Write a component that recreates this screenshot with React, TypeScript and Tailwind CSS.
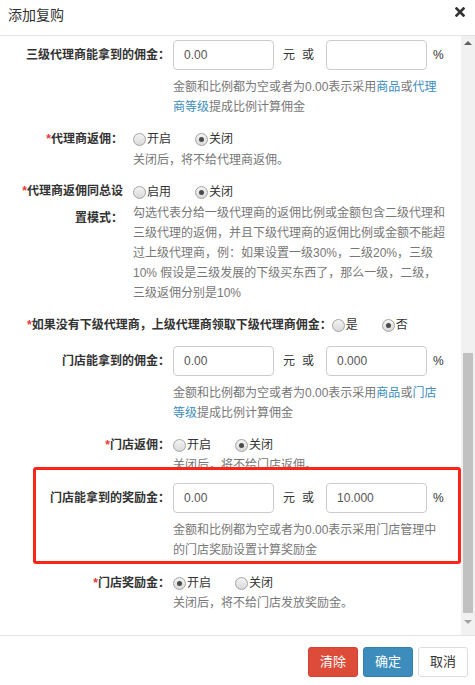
import React from "react";

const FONT = "font-[family-name:'Liberation_Sans','Noto_Sans_CJK_SC',sans-serif]";

function Radio({ checked, label, first }: { checked?: boolean; label: string; first?: boolean }) {
  return (
    <span className={`flex items-center ${first ? "" : "ml-[24px]"}`}>
      <span className="flex h-[13px] w-[13px] items-center justify-center rounded-full border border-[#a3a3a3] bg-gradient-to-b from-[#f4f4f4] to-[#d9d9d9]">
        {checked && <span className="h-[5px] w-[5px] rounded-full bg-[#4a4a4a]" />}
      </span>
      <span className="ml-[1px] text-[12px] leading-[20px] text-[#333]">{label}</span>
    </span>
  );
}

function Req() {
  return <span className="text-[#e4393c]">*</span>;
}

function Box({ value }: { value: string }) {
  return (
    <div className="flex h-[30px] w-[101px] shrink-0 items-center rounded-[4px] border border-[#ccc] bg-white px-[10px] text-[12px] text-[#555]">
      {value}
    </div>
  );
}

function AmountRow({ label, a, b, help }: { label: string; a: string; b: string; help: React.ReactNode }) {
  return (
    <div className="flex items-start">
      <div className="w-[170px] shrink-0 text-right text-[12px] font-bold leading-[30px] text-[#333]">{label}</div>
      <div className="ml-[3px] w-[270px]">
        <div className="flex h-[30px] items-center text-[12px] text-[#333]">
          <Box value={a} />
          <span className="ml-[9px]">元</span>
          <span className="ml-[7px]">或</span>
          <div className="ml-[12px]">
            <Box value={b} />
          </div>
          <span className="ml-[6px]">%</span>
        </div>
        <p className="mt-[7px] text-[12px] leading-[20px] text-[#777]">{help}</p>
      </div>
    </div>
  );
}

function Link({ children }: { children: React.ReactNode }) {
  return <span className="text-[#3c8dbc]">{children}</span>;
}

export default function App() {
  return (
    <div className={`h-[685px] w-[475px] overflow-hidden bg-white ${FONT}`}>
      {/* header */}
      <div className="flex h-[36px] items-start justify-between border-b border-[#e5e5e5] pl-[8px] pr-[10px]">
        <h4 className="pt-[6px] text-[14px] leading-[18px] text-[#333]">添加复购</h4>
        <svg width="10" height="10" viewBox="0 0 10 10" className="mt-[7px]">
          <path d="M1.5 1.5 L8.5 8.5 M8.5 1.5 L1.5 8.5" stroke="#333" strokeWidth="2.6" strokeLinecap="square" />
        </svg>
      </div>

      {/* body */}
      <div className="flex h-[599px]">
        <div className="relative min-w-0 flex-1 overflow-hidden pt-[4px]">
          <div className="mb-[12px]">
            <AmountRow
              label="三级代理商能拿到的佣金："
              a="0.00"
              b=""
              help={
                <>
                  金额和比例都为空或者为0.00表示采用<Link>商品</Link>或<Link>代理商等级</Link>提成比例计算佣金
                </>
              }
            />
          </div>

          <div className="mb-[12px] flex items-start">
            <div className="w-[123px] shrink-0 text-right text-[12px] font-bold leading-[20px] text-[#333]">
              <Req />代理商返佣：
            </div>
            <div className="ml-[10px]">
              <div className="flex h-[20px] items-center">
                <Radio first label="开启" />
                <Radio checked label="关闭" />
              </div>
              <p className="mt-[1px] text-[12px] leading-[20px] text-[#777]">关闭后，将不给代理商返佣。</p>
            </div>
          </div>

          <div className="mb-[12px] flex items-start">
            <div className="ml-[19px] -mt-[4px] w-[104px] shrink-0 text-right text-[12px] font-bold leading-[27px] text-[#333]">
              <Req />代理商返佣同总设置模式：
            </div>
            <div className="ml-[10px]">
              <div className="flex h-[20px] items-center">
                <Radio first label="启用" />
                <Radio checked label="关闭" />
              </div>
              <p className="mt-[1px] w-[313px] text-[12px] leading-[20px] text-[#777]">
                勾选代表分给一级代理商的返佣比例或金额包含二级代理和三级代理的返佣，并且下级代理商的返佣比例或金额不能超过上级代理商，例：如果设置一级30%，二级20%，三级10% 假设是三级发展的下级买东西了，那么一级，二级，三级返佣分别是10%
              </p>
            </div>
          </div>

          <div className="mb-[11px] flex h-[20px] items-center pl-[27px]">
            <span className="text-[12px] font-bold leading-[20px] text-[#333]">
              <Req />如果没有下级代理商，上级代理商领取下级代理商佣金：
            </span>
            <Radio first label="是" />
            <Radio checked label="否" />
          </div>

          <div className="mb-[12px]">
            <AmountRow
              label="门店能拿到的佣金："
              a="0.00"
              b="0.000"
              help={
                <>
                  金额和比例都为空或者为0.00表示采用<Link>商品</Link>或<Link>门店等级</Link>提成比例计算佣金
                </>
              }
            />
          </div>

          <div className="mb-[8px] flex items-start">
            <div className="w-[170px] shrink-0 text-right text-[12px] font-bold leading-[20px] text-[#333]">
              <Req />门店返佣：
            </div>
            <div className="ml-[3px]">
              <div className="flex h-[20px] items-center">
                <Radio first label="开启" />
                <Radio checked label="关闭" />
              </div>
              <p className="text-[12px] leading-[20px] text-[#777]">关闭后，将不给门店返佣。</p>
            </div>
          </div>

          <div className="relative mb-[13px]">
            <AmountRow
              label="门店能拿到的奖励金："
              a="0.00"
              b="10.000"
              help="金额和比例都为空或者为0.00表示采用门店管理中的门店奖励设置计算奖励金"
            />
            {/* annotation frame */}
            <div className="pointer-events-none absolute -top-[16px] left-[33px] right-0 h-[97px] rounded-[3px] border-[3px] border-[#ff2418]" />
          </div>

          <div className="flex items-start">
            <div className="w-[170px] shrink-0 text-right text-[12px] font-bold leading-[20px] text-[#333]">
              <Req />门店奖励金：
            </div>
            <div className="ml-[3px]">
              <div className="flex h-[20px] items-center">
                <Radio first checked label="开启" />
                <Radio label="关闭" />
              </div>
              <p className="text-[12px] leading-[20px] text-[#777]">关闭后，将不给门店发放奖励金。</p>
            </div>
          </div>
        </div>

        {/* scrollbar */}
        <div className="flex w-[14px] shrink-0 flex-col items-center bg-[#f1f1f1]">
          <div className="mt-[5px] h-0 w-0 border-x-[4px] border-b-[4px] border-x-transparent border-b-[#606060]" />
          <div className="mt-[308px] h-[260px] w-[10px] bg-[#c1c1c1]" />
          <div className="mt-[7px] h-0 w-0 border-x-[4px] border-t-[4px] border-x-transparent border-t-[#a3a3a3]" />
        </div>
      </div>

      {/* footer */}
      <div className="flex justify-end gap-[5px] border-t border-[#e5e5e5] pr-[7px] pt-[11px]">
        <button className="h-[30px] w-[50px] rounded-[3px] border border-[#d43f3a] bg-[#dd4b39] text-[13px] text-white">清除</button>
        <button className="h-[30px] w-[50px] rounded-[3px] border border-[#367fa9] bg-[#3c8dbc] text-[13px] text-white">确定</button>
        <button className="h-[30px] w-[50px] rounded-[3px] border border-[#ddd] bg-white text-[13px] text-[#333]">取消</button>
      </div>
    </div>
  );
}
